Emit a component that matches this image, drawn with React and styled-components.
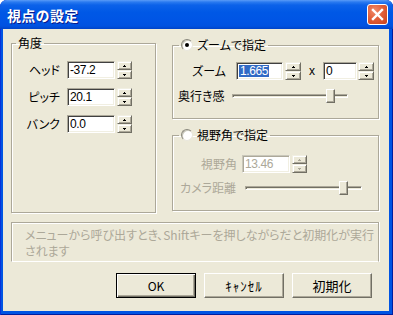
import React from 'react';
import styled, { createGlobalStyle } from 'styled-components';

const GlobalStyle = createGlobalStyle`
  html, body { margin: 0; padding: 0; background: #ffffff; }
  body {
    font-family: "Noto Sans CJK JP", "Noto Sans", sans-serif;
    font-size: 12px;
    font-feature-settings: "palt";
  }
  * { box-sizing: border-box; }
`;

const Window = styled.div`
  width: 393px;
  height: 315px;
  display: flex;
  flex-direction: column;
  background: #0054e3;
  border-radius: 7px 7px 0 0;
  overflow: hidden;
  box-shadow: inset 1px 0 0 #0831d9, inset -1px 0 0 #001ea0, inset 0 -1px 0 #001ea0;
`;

const TitleBar = styled.div`
  height: 29px;
  flex: none;
  display: flex;
  align-items: center;
  justify-content: space-between;
  padding: 0 5px 0 7px;
  background: linear-gradient(
    to bottom,
    #5a9cf7 0px,
    #2b7bf0 2px,
    #0c62e9 5px,
    #0058e6 12px,
    #0055e5 20px,
    #0052e0 26px,
    #0043c8 29px
  );
`;

const Title = styled.span`
  color: #ffffff;
  font-weight: bold;
  font-size: 14px;
  letter-spacing: 0.3px;
  font-feature-settings: normal;
  text-shadow: 1px 1px 0 #0a1a8a;
  line-height: 16px;
`;

const CloseButton = styled.div`
  width: 21px;
  height: 21px;
  border: 1px solid #ffffff;
  border-radius: 3px;
  background: radial-gradient(circle at 35% 30%, #f08c6c 0%, #e2603a 45%, #c8411a 100%);
  display: flex;
  align-items: center;
  justify-content: center;
`;

const Client = styled.div`
  flex: 1;
  margin: 0 4px 4px 3px;
  background: #ece9d8;
  display: flex;
  flex-direction: column;
  padding: 7px 10px 0 8px;
`;

const TopArea = styled.div`
  display: grid;
  grid-template-columns: 145px 207px;
  column-gap: 16px;
  align-items: start;
`;

const RightColumn = styled.div`
  display: flex;
  flex-direction: column;
  gap: 9px;
  padding-top: 2px;
`;

const Group = styled.fieldset`
  margin: 0;
  padding: 0;
  min-width: 0;
  height: ${(p) => p.$h}px;
  border: 1px solid #aca899;
  box-shadow: inset 1px 1px 0 #ffffff, 1px 1px 0 #ffffff;
`;

const Legend = styled.legend`
  margin-left: ${(p) => p.$ml}px;
  padding: 0 2px;
  line-height: 14px;
  height: 14px;
  display: flex;
  align-items: center;
  gap: 4px;
  color: #000000;
`;

const Rows = styled.div`
  display: flex;
  flex-direction: column;
  gap: ${(p) => p.$gap}px;
  padding-top: ${(p) => p.$pt}px;
`;

const Row = styled.div`
  display: flex;
  align-items: center;
  height: ${(p) => p.$h || 18}px;
`;

const Label = styled.span`
  width: ${(p) => p.$w}px;
  flex: none;
  text-align: ${(p) => (p.$right ? 'right' : 'left')};
  margin-right: ${(p) => p.$mr || 0}px;
  padding-left: ${(p) => p.$pl || 0}px;
  white-space: nowrap;
  color: ${(p) => (p.$disabled ? '#aca899' : '#000000')};
  line-height: 14px;
`;

const TextBox = styled.div`
  width: ${(p) => p.$w}px;
  height: 18px;
  flex: none;
  background: #ffffff;
  border: 1px solid;
  border-color: ${(p) => (p.$disabled ? '#c9c7ba #ffffff #ffffff #c9c7ba' : '#aca899 #ffffff #ffffff #aca899')};
  box-shadow: ${(p) =>
    p.$disabled
      ? 'inset 1px 1px 0 #aca899, inset -1px -1px 0 #f1efe2'
      : 'inset 1px 1px 0 #404040, inset -1px -1px 0 #f1efe2'};
  padding: 0 0 0 2px;
  display: flex;
  align-items: center;
  font-family: "Liberation Sans", Arial, sans-serif;
  font-size: 12px;
  letter-spacing: -0.4px;
  font-feature-settings: normal;
  color: ${(p) => (p.$disabled ? '#aca899' : '#000000')};
`;

const Selected = styled.span`
  background: #316ac5;
  color: #ffffff;
  line-height: 12px;
  padding: 0 1px 0 1px;
`;

const Spin = styled.div`
  display: flex;
  flex-direction: column;
  width: ${(p) => p.$w}px;
  height: 18px;
  flex: none;
  margin-left: ${(p) => p.$ml}px;
`;

const SpinHalf = styled.div`
  flex: 1;
  display: flex;
  align-items: center;
  justify-content: center;
  background: #ece9d8;
  border: 1px solid;
  border-color: #f1efe2 #716f64 #716f64 #f1efe2;
  box-shadow: inset 1px 1px 0 #ffffff, inset -1px -1px 0 #aca899;
`;

const Times = styled.span`
  width: 22px;
  flex: none;
  text-align: center;
  font-family: "Liberation Sans", Arial, sans-serif;
  font-size: 12px;
  line-height: 14px;
`;

const Track = styled.div`
  position: relative;
  width: ${(p) => p.$w}px;
  height: 4px;
  flex: none;
  border: 1px solid;
  border-color: #aca899 #ffffff #ffffff #aca899;
  box-shadow: inset 1px 1px 0 #716f64;
  background: #ece9d8;
`;

const Thumb = styled.div`
  position: absolute;
  top: -6px;
  width: 9px;
  height: 14px;
  background: #ece9d8;
  border: 1px solid;
  border-color: #ffffff #716f64 #716f64 #ffffff;
  box-shadow: inset -1px -1px 0 #aca899;
`;

const Radio = styled.span`
  position: relative;
  width: 12px;
  height: 12px;
  flex: none;
  border-radius: 50%;
  background: #ffffff;
  border: 1px solid;
  border-color: #8a887c #e8e6dc #e8e6dc #8a887c;
  box-shadow: inset 1px 1px 0 #c9c7ba;

  &::after {
    content: '';
    display: ${(p) => (p.$checked ? 'block' : 'none')};
    position: absolute;
    left: 3px;
    top: 3px;
    width: 4px;
    height: 4px;
    border-radius: 50%;
    background: #000000;
  }
`;

const InfoBox = styled.div`
  margin-top: 9px;
  height: 40px;
  border: 1px solid #aca899;
  border-bottom: 1px solid #ffffff;
  box-shadow: inset 1px 1px 0 #ffffff, 1px 0 0 #ffffff;
  padding: 4px 0 0 13px;
`;

const InfoText = styled.div`
  color: #aca899;
  line-height: 16px;
  white-space: nowrap;
`;

const ButtonRow = styled.div`
  margin-top: 11px;
  margin-right: 7px;
  display: flex;
  justify-content: flex-end;
  gap: 8px;
`;

const Button = styled.div`
  width: 80px;
  height: 25px;
  display: flex;
  align-items: center;
  justify-content: center;
  background: #ece9d8;
  border: 1px solid;
  border-color: ${(p) => (p.$default ? '#000000' : '#ffffff #716f64 #716f64 #ffffff')};
  box-shadow: ${(p) =>
    p.$default
      ? 'inset 1px 1px 0 #ffffff, inset -1px -1px 0 #716f64, inset -2px -2px 0 #aca899'
      : 'inset -1px -1px 0 #aca899'};
  font-size: ${(p) => p.$fs || 12}px;
  letter-spacing: ${(p) => p.$ls || 0}px;
  line-height: 14px;
`;

const ArrowIcon = ({ up, disabled }) => (
  <svg width="3" height="2" viewBox="0 0 3 2" shapeRendering="crispEdges">
    <g fill={disabled ? '#aca899' : '#000000'}>
      {up ? (
        <>
          <rect x="1" y="0" width="1" height="1" />
          <rect x="0" y="1" width="3" height="1" />
        </>
      ) : (
        <>
          <rect x="0" y="0" width="3" height="1" />
          <rect x="1" y="1" width="1" height="1" />
        </>
      )}
    </g>
  </svg>
);

const Spinner = ({ w = 15, ml = 2, disabled }) => (
  <Spin $w={w} $ml={ml}>
    <SpinHalf>
      <ArrowIcon up disabled={disabled} />
    </SpinHalf>
    <SpinHalf>
      <ArrowIcon disabled={disabled} />
    </SpinHalf>
  </Spin>
);

const Slider = ({ w, pos }) => (
  <Track $w={w}>
    <Thumb style={{ left: pos }} />
  </Track>
);

export default function App() {
  return (
    <>
      <GlobalStyle />
      <Window>
        <TitleBar>
          <Title>視点の設定</Title>
          <CloseButton>
            <svg width="13" height="13" viewBox="0 0 13 13">
              <path d="M2 2 L11 11 M11 2 L2 11" stroke="#ffffff" strokeWidth="2.4" strokeLinecap="square" />
            </svg>
          </CloseButton>
        </TitleBar>
        <Client>
          <TopArea>
            <Group $h={177}>
              <Legend $ml={4}>角度</Legend>
              <Rows $pt={11} $gap={9}>
                <Row>
                  <Label $w={48} $right $mr={7}>ヘッド</Label>
                  <TextBox $w={48}>-37.2</TextBox>
                  <Spinner />
                </Row>
                <Row>
                  <Label $w={48} $right $mr={7}>ピッチ</Label>
                  <TextBox $w={48}>20.1</TextBox>
                  <Spinner />
                </Row>
                <Row>
                  <Label $w={48} $right $mr={7}>バンク</Label>
                  <TextBox $w={48}>0.0</TextBox>
                  <Spinner />
                </Row>
              </Rows>
            </Group>
            <RightColumn>
              <Group $h={81}>
                <Legend $ml={6}>
                  <Radio $checked />
                  ズームで指定
                </Legend>
                <Rows $pt={10} $gap={8}>
                  <Row>
                    <Label $w={53} $right $mr={10}>ズーム</Label>
                    <TextBox $w={47}>
                      <Selected>1.665</Selected>
                    </TextBox>
                    <Spinner w={16} ml={2} />
                    <Times>x</Times>
                    <TextBox $w={34}>0</TextBox>
                    <Spinner w={16} ml={1} />
                  </Row>
                  <Row $h={15}>
                    <Label $w={59} $pl={5}>奥行き感</Label>
                    <Slider w={116} pos={93} />
                  </Row>
                </Rows>
              </Group>
              <Group $h={83}>
                <Legend $ml={6}>
                  <Radio />
                  視野角で指定
                </Legend>
                <Rows $pt={13} $gap={7}>
                  <Row>
                    <Label $w={64} $right $mr={5} $disabled>視野角</Label>
                    <TextBox $w={48} $disabled>13.46</TextBox>
                    <Spinner disabled />
                  </Row>
                  <Row $h={15}>
                    <Label $w={72} $pl={7} $disabled>カメラ距離</Label>
                    <Slider w={117} pos={93} />
                  </Row>
                </Rows>
              </Group>
            </RightColumn>
          </TopArea>
          <InfoBox>
            <InfoText>
              メニューから呼び出すとき、Shiftキーを押しながらだと初期化が実行
              <br />
              されます
            </InfoText>
          </InfoBox>
          <ButtonRow>
            <Button $default>OK</Button>
            <Button $ls={1} $fs={13}>ｷｬﾝｾﾙ</Button>
            <Button $fs={13}>初期化</Button>
          </ButtonRow>
        </Client>
      </Window>
    </>
  );
}
